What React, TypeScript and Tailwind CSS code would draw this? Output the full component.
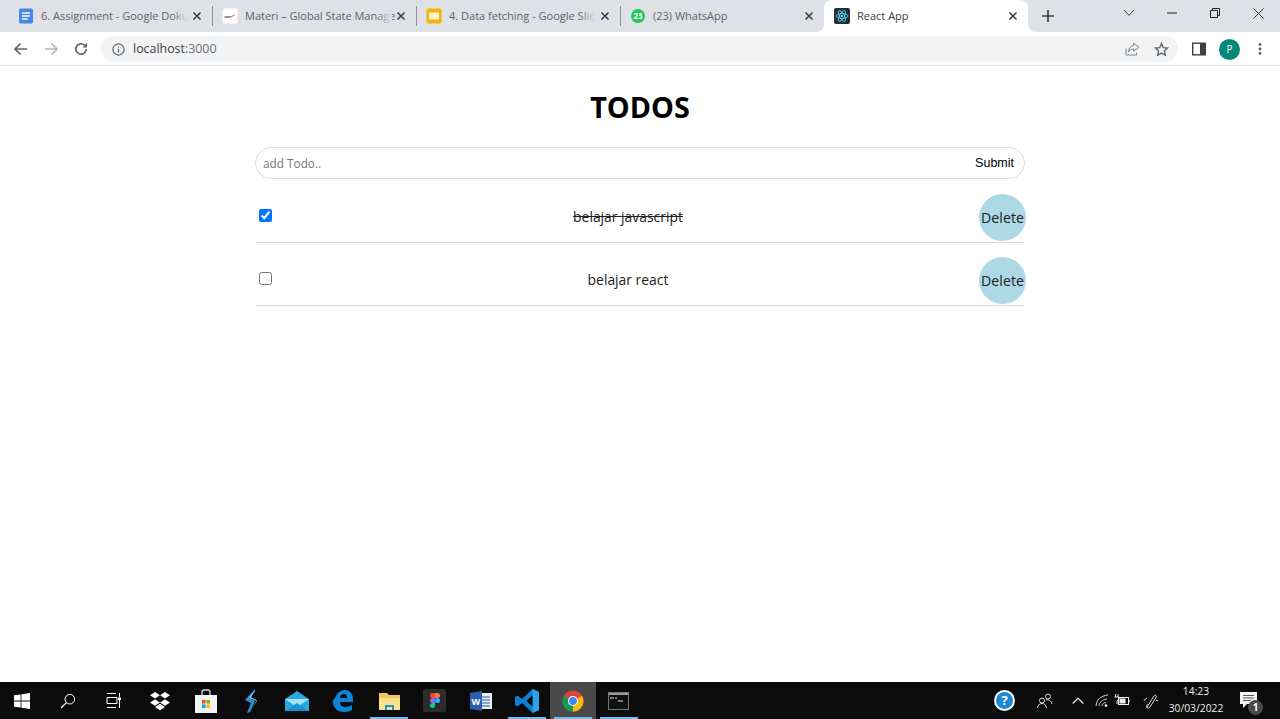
import React from 'react';

const uiFont = "font-['Open_Sans','Noto_Sans',sans-serif]";

function TabClose() {
  return (
    <svg width="10" height="10" viewBox="0 0 10 10" className="shrink-0">
      <path d="M1.500 1.500l7 7M8.500 1.500l-7 7" stroke="#3c4043" strokeWidth="1.600" />
    </svg>
  );
}

function DocsIcon() {
  return (
    <svg width="16" height="16" viewBox="0 0 16 16" className="shrink-0">
      <rect x="1" y="0.500" width="14" height="15" rx="1.800" fill="#4a86e8" />
      <path d="M4 5h8M4 8h8M4 11h5.500" stroke="#fff" strokeWidth="1.300" />
    </svg>
  );
}

function MateriIcon() {
  return (
    <svg width="16" height="16" viewBox="0 0 16 16" className="shrink-0">
      <rect x="0.500" y="0.500" width="15" height="15" rx="1.500" fill="#fff" />
      <path d="M2.500 9h6" stroke="#555" strokeWidth="1.200" />
      <path d="M8.500 9l4-2" stroke="#e8743b" strokeWidth="1.300" />
    </svg>
  );
}

function SlidesIcon() {
  return (
    <svg width="16" height="16" viewBox="0 0 16 16" className="shrink-0">
      <rect x="0.500" y="0.500" width="15" height="15" rx="1.800" fill="#f4b400" />
      <rect x="3" y="4.500" width="10" height="7" fill="#fff3cf" />
    </svg>
  );
}

function WhatsappIcon() {
  return (
    <svg width="16" height="16" viewBox="0 0 16 16" className="shrink-0">
      <circle cx="8" cy="8" r="7" fill="#25c75c" />
      <text x="8" y="11" textAnchor="middle" fontSize="8" fontWeight="700" fill="#fff" fontFamily="Open Sans">23</text>
    </svg>
  );
}

function ReactIcon() {
  return (
    <svg width="16" height="16" viewBox="0 0 16 16" className="shrink-0">
      <rect width="16" height="16" rx="2" fill="#20303a" />
      <g fill="none" stroke="#61dafb" strokeWidth="0.800">
        <ellipse cx="8" cy="8" rx="6" ry="2.400" />
        <ellipse cx="8" cy="8" rx="6" ry="2.400" transform="rotate(60 8 8)" />
        <ellipse cx="8" cy="8" rx="6" ry="2.400" transform="rotate(120 8 8)" />
      </g>
      <circle cx="8" cy="8" r="1.200" fill="#61dafb" />
    </svg>
  );
}

const tabs = [
  { title: '6. Assignment - Google Doku', icon: <DocsIcon /> },
  { title: 'Materi – Global State Manage', icon: <MateriIcon /> },
  { title: '4. Data fetching - Google Slic', icon: <SlidesIcon /> },
  { title: '(23) WhatsApp', icon: <WhatsappIcon /> },
];

function TabStrip() {
  return (
    <div className="flex h-8 shrink-0 items-stretch bg-[#dee1e6] pl-2">
      {tabs.map((tab, i) => (
        <div key={tab.title} className="relative flex w-[204px] items-center pl-[10px] pr-[10px]">
          {tab.icon}
          <span className="relative ml-[7px] flex-1 whitespace-nowrap text-[11px] text-[#5f6368]">
            {tab.title}
            <span className="absolute inset-y-0 right-1 w-4 bg-gradient-to-r from-transparent to-[#dee1e6]" />
          </span>
          <TabClose />
          {i < 3 ? <div className="absolute right-[-1px] top-[6px] h-[20px] w-px bg-[#8f9196]" /> : null}
        </div>
      ))}
      <div className="relative flex w-[204px] items-center rounded-t-lg bg-white pl-[10px] pr-[10px]">
        <div className="absolute bottom-0 left-[-8px] h-2 w-2 bg-white">
          <div className="h-2 w-2 rounded-br-lg bg-[#dee1e6]" />
        </div>
        <div className="absolute bottom-0 right-[-8px] h-2 w-2 bg-white">
          <div className="h-2 w-2 rounded-bl-lg bg-[#dee1e6]" />
        </div>
        <ReactIcon />
        <span className="ml-[7px] flex-1 whitespace-nowrap text-[11px] text-[#3c4043]">React App</span>
        <TabClose />
      </div>
      <div className="ml-[13px] flex w-[14px] items-center">
        <svg width="14" height="14" viewBox="0 0 14 14">
          <path d="M7 1v12M1 7h12" stroke="#3c4043" strokeWidth="1.700" />
        </svg>
      </div>
      <div className="ml-auto flex items-start">
        <div className="flex h-[26px] w-[43px] items-center justify-center">
          <svg width="12" height="8" viewBox="0 0 12 8">
            <path d="M1 1l5 5.400L11 1" stroke="#3c4043" fill="none" />
          </svg>
        </div>
        <div className="flex h-[26px] w-[43px] items-center justify-center">
          <svg width="10" height="2" viewBox="0 0 10 2">
            <path d="M0 1h10" stroke="#222" />
          </svg>
        </div>
        <div className="flex h-[26px] w-[43px] items-center justify-center">
          <svg width="10" height="10" viewBox="0 0 10 10">
            <path d="M.5 2.500h7v7h-7zM2.500 2.500v-2h7v7h-2" stroke="#222" fill="none" />
          </svg>
        </div>
        <div className="flex h-[26px] w-[44px] items-center justify-center">
          <svg width="11" height="11" viewBox="0 0 11 11">
            <path d="M.5.500l10 10M10.500.500l-10 10" stroke="#333" />
          </svg>
        </div>
      </div>
    </div>
  );
}

function Toolbar() {
  return (
    <div className="flex h-[34px] shrink-0 items-center border-b border-[#dfe1e5] bg-white pt-px">
      <div className="flex w-[101px] items-center pl-[13px]">
        <svg width="16" height="16" viewBox="0 0 16 16">
          <path d="M14 8H2.500M7.500 2.500L2 8l5.500 5.500" stroke="#5f6368" strokeWidth="1.700" fill="none" />
        </svg>
        <svg width="16" height="16" viewBox="0 0 16 16" className="ml-[14px]">
          <path d="M2 8h11.500M8.500 2.500L14 8l-5.500 5.500" stroke="#b4b6b9" strokeWidth="1.700" fill="none" />
        </svg>
        <svg width="16" height="16" viewBox="0 0 16 16" className="ml-[14px]">
          <path d="M13.200 8a5.200 5.200 0 1 1-1.600-3.800" stroke="#5f6368" strokeWidth="1.700" fill="none" />
          <path d="M14 1.800v4.600H9.400z" fill="#5f6368" />
        </svg>
      </div>
      <div className="flex h-[26px] w-[1077px] items-center rounded-full bg-[#f1f3f4] pl-[11px] pr-2">
        <svg width="13" height="13" viewBox="0 0 14 14" className="shrink-0">
          <circle cx="7" cy="7" r="6" stroke="#5f6368" strokeWidth="1.300" fill="none" />
          <path d="M7 6.200v4M7 3.700v1.200" stroke="#5f6368" strokeWidth="1.400" />
        </svg>
        <span className="ml-[8px] text-[12.4px] text-[#3c4043]">
          localhost<span className="text-[#6d7074]">:3000</span>
        </span>
        <svg width="16" height="16" viewBox="0 0 16 16" className="ml-auto mr-[14px]">
          <path d="M2 7.500V14h10.500v-2.500" stroke="#80868b" strokeWidth="1" fill="none" />
          <path d="M9.500 2L15 6.200l-5.500 4V8C7 8 5.300 9 4.200 11.200 4.500 7.600 6.400 5 9.500 4.600z" stroke="#80868b" strokeWidth="1" fill="none" />
        </svg>
        <svg width="15" height="15" viewBox="0 0 16 16" className="mr-[1px]">
          <path d="M8 1.600l1.900 4.300 4.600.5-3.400 3.100 1 4.600L8 11.800l-4.100 2.300 1-4.600-3.400-3.100 4.600-.5z" stroke="#5f6368" strokeWidth="1.400" fill="none" />
        </svg>
      </div>
      <svg width="14" height="14" viewBox="0 0 14 14" className="ml-[14px]">
        <rect x="0.700" y="1.200" width="12.600" height="11.600" fill="none" stroke="#3c4043" strokeWidth="1.400" />
        <rect x="8" y="1.200" width="5.300" height="11.600" fill="#3c4043" />
      </svg>
      <div className="ml-[13px] flex h-[21px] w-[21px] items-center justify-center rounded-full bg-[#00897b] text-[10px] text-white">
        P
      </div>
      <svg width="4" height="14" viewBox="0 0 4 14" className="ml-[18px]">
        <circle cx="2" cy="2.500" r="1.400" fill="#5f6368" />
        <circle cx="2" cy="7" r="1.400" fill="#5f6368" />
        <circle cx="2" cy="11.500" r="1.400" fill="#5f6368" />
      </svg>
    </div>
  );
}

function TodoRow({ text, done }: { text: string; done: boolean }) {
  return (
    <div className="mx-px flex h-[49px] items-center border-b border-[#d9d9d9] pl-[3px]">
      <input type="checkbox" defaultChecked={done} className="m-0 mb-[5px] h-[13px] w-[13px]" />
      <p className={`flex-1 pb-px pl-[5px] text-center text-[13.9px] text-[#222] ${done ? 'line-through' : ''}`}>{text}</p>
      <button className="mb-px mr-[-2px] h-[47px] w-[47px] rounded-full bg-[#add8e6] text-center text-[14.2px] text-[#222]">
        Delete
      </button>
    </div>
  );
}

function Page() {
  return (
    <div className="flex-1 bg-white">
      <div className="mx-auto w-[770px]">
        <h1 className="pb-[19px] pt-[20px] text-center text-[28.8px] font-bold leading-[42px] text-black">TODOS</h1>
        <form className="flex h-8 items-center rounded-full border border-[#dcdcdc] pl-[7px] pr-[10px]">
          <input
            placeholder="add Todo.."
            className="mt-[2px] flex-1 bg-transparent text-[11.8px] text-black outline-none placeholder:text-[#767676]"
          />
          <button type="button" className="text-[12.5px] font-['Liberation_Sans',sans-serif] text-black">
            Submit
          </button>
        </form>
        <div className="mt-[15px] flex flex-col gap-[14px]">
          <TodoRow text="belajar javascript" done />
          <TodoRow text="belajar react" done={false} />
        </div>
      </div>
    </div>
  );
}

function Slot({ children, active, open }: { children: React.ReactNode; active?: boolean; open?: boolean }) {
  return (
    <div className={`relative flex h-full w-[45.9px] shrink-0 items-center justify-center ${active ? 'bg-[#4a4a4a]' : ''}`}>
      {children}
      {open ? <div className="absolute inset-x-0 bottom-0 mx-auto h-[2px] w-[38px] bg-[#76b9ed]" /> : null}
    </div>
  );
}

function Taskbar() {
  return (
    <div className="flex h-[37px] shrink-0 items-stretch bg-[#0b0b0c] text-white">
      <div className="-ml-px flex">
        <Slot>
          <svg width="16" height="16" viewBox="0 0 16 16">
            <path d="M0 2.300l6.600-.9v6.200H0zM7.400 1.300L16 0v7.600H7.400zM0 8.400h6.600v6.200L0 13.700zM7.400 8.400H16V16l-8.600-1.300z" fill="#fff" />
          </svg>
        </Slot>
        <Slot>
          <svg width="16" height="16" viewBox="0 0 16 16">
            <circle cx="9.800" cy="6.200" r="4.800" stroke="#fff" fill="none" />
            <path d="M6.400 9.600L1 15" stroke="#fff" strokeWidth="1.200" />
          </svg>
        </Slot>
        <Slot>
          <svg width="16" height="15" viewBox="0 0 16 15">
            <path d="M1 .5h9M1 14.500h9M1 4.500h10v6H1zM13.500 0v4M13.500 7v8" stroke="#fff" fill="none" />
            <path d="M12 4.500h3v2.500h-3z" fill="#fff" />
          </svg>
        </Slot>
        <Slot>
          <svg width="22" height="20" viewBox="0 0 22 20">
            <path d="M6 1l5 3.300-5 3.300-5-3.300zM16 1l5 3.300-5 3.300-5-3.300zM6 8.200l5 3.300-5 3.300-5-3.300zM16 8.200l5 3.300-5 3.300-5-3.300zM6 16l5-3.200 5 3.200-5 3.300z" fill="#fff" />
          </svg>
        </Slot>
        <Slot>
          <svg width="22" height="24" viewBox="0 0 22 24">
            <path d="M7 6V3a2 2 0 0 1 2-2h4a2 2 0 0 1 2 2v3" stroke="#ddd" strokeWidth="1.300" fill="none" />
            <rect x="0" y="6" width="22" height="18" fill="#f3f3f3" />
            <rect x="7" y="11" width="3.600" height="3.600" fill="#f25022" />
            <rect x="11.400" y="11" width="3.600" height="3.600" fill="#7fba00" />
            <rect x="7" y="15.400" width="3.600" height="3.600" fill="#00a4ef" />
            <rect x="11.400" y="15.400" width="3.600" height="3.600" fill="#ffb900" />
          </svg>
        </Slot>
        <Slot>
          <svg width="14" height="24" viewBox="0 0 14 24">
            <path d="M11 0L1 11l6 3-4 10 3-1 5-11-5-2.500 5-7z" fill="#2e8fd8" />
            <path d="M11 0L5 9l8 3-6 9 6-10-6-2.500z" fill="#7fd0f7" />
          </svg>
        </Slot>
        <Slot>
          <svg width="24" height="20" viewBox="0 0 24 20">
            <path d="M0 8L12 0l12 8v12H0z" fill="#29a8e0" />
            <path d="M0 8l12 8 12-8" fill="#a6e2f7" />
            <path d="M0 20l12-8 12 8z" fill="#1c93cf" />
          </svg>
        </Slot>
        <Slot>
          <svg width="20" height="22" viewBox="0 0 20 22">
            <path d="M2 8C4 2 9 0 12 0c5 0 8 4 8 9v3H7c0 3 2 5 5 5 3 0 5-1 7-2v5c-2 1-4 2-8 2-6 0-11-4-11-10 0-1 0-3 2-4zm5 0h7c0-3-1-4-3-4-2 0-4 1-4 4z" fill="#0a84d6" />
          </svg>
        </Slot>
        <Slot open>
          <svg width="21" height="18" viewBox="0 0 21 18">
            <path d="M0 1h8l2 2h11v4H0z" fill="#f0c75e" />
            <rect y="6" width="21" height="12" fill="#fbe08e" />
            <path d="M6 18v-5h9v5h-2v-3H8v3z" fill="#1c93cf" />
          </svg>
        </Slot>
        <Slot>
          <div className="flex h-[23px] w-[23px] items-center justify-center rounded-[2px] bg-[#2c2c2c]">
            <svg width="10" height="15" viewBox="0 0 10 15">
              <path d="M0 2.500A2.500 2.500 0 0 1 2.500 0H5v5H2.500A2.500 2.500 0 0 1 0 2.500z" fill="#f24e1e" />
              <path d="M5 0h2.500a2.500 2.500 0 0 1 0 5H5z" fill="#ff7262" />
              <path d="M0 7.500A2.500 2.500 0 0 1 2.500 5H5v5H2.500A2.500 2.500 0 0 1 0 7.500z" fill="#a259ff" />
              <circle cx="7.500" cy="7.500" r="2.500" fill="#1abcfe" />
              <path d="M0 12.500A2.500 2.500 0 0 1 2.500 10H5v2.500a2.500 2.500 0 0 1-5 0z" fill="#0acf83" />
            </svg>
          </div>
        </Slot>
        <Slot>
          <svg width="22" height="20" viewBox="0 0 22 20">
            <rect x="8" y="2" width="14" height="16" fill="#e8eef7" />
            <path d="M12 6h8M12 9h8M12 12h8M12 15h8" stroke="#2b5797" />
            <path d="M0 2l12-2v20L0 18z" fill="#2b5fb3" />
            <text x="5.800" y="13.500" textAnchor="middle" fontSize="9" fontWeight="700" fill="#fff" fontFamily="Open Sans">W</text>
          </svg>
        </Slot>
        <Slot open>
          <svg width="24" height="24" viewBox="0 0 24 24">
            <path d="M17.500 0L24 3v18l-6.500 3L7 14l-4.500 3.500L0 16V8l2.500-1.500L7 10zM17.500 6.500L11.500 12l6 5.500z" fill="#0a7fd4" />
            <path d="M17.500 0L24 3v18l-6.500 3z" fill="#2aa3ef" />
            <path d="M17.500 6.500L11.500 12l6 5.500z" fill="#0b0b0c" />
          </svg>
        </Slot>
        <Slot active open>
          <svg width="22" height="22" viewBox="0 0 48 48">
            <circle cx="24" cy="24" r="23" fill="#db4437" />
            <path d="M24 24L43.900 12.500A23 23 0 0 1 24 47z" fill="#fbbc05" />
            <path d="M24 24L24 47A23 23 0 0 1 4.100 12.500z" fill="#0f9d58" />
            <circle cx="24" cy="24" r="11" fill="#fff" />
            <circle cx="24" cy="24" r="8.500" fill="#4285f4" />
          </svg>
        </Slot>
        <Slot open>
          <div className="h-[18px] w-[21px] border border-[#777] bg-[#111]">
            <div className="h-[2px] bg-[#999]" />
            <svg width="19" height="10" viewBox="0 0 19 10">
              <path d="M1 3h4M6 3h2M9 6h5" stroke="#ddd" />
            </svg>
          </div>
        </Slot>
      </div>

      <div className="ml-auto flex items-center">
        <div className="flex h-[21px] w-[21px] items-center justify-center rounded-full border-[2px] border-white bg-[#1e88d8] text-[13px] font-bold leading-none">
          ?
        </div>
        <svg width="16" height="16" viewBox="0 0 16 16" className="ml-[22px]">
          <circle cx="5" cy="7.500" r="2.500" stroke="#ddd" fill="none" />
          <path d="M.5 15c.3-3 2-4.500 4.500-4.500S9 12 9.500 15" stroke="#ddd" fill="none" />
          <circle cx="11" cy="3.500" r="2.500" stroke="#ddd" fill="none" />
          <path d="M9 7c2.500-.5 5 0 6 4" stroke="#ddd" fill="none" />
        </svg>
        <svg width="12" height="8" viewBox="0 0 12 8" className="ml-[19px]">
          <path d="M.7 6.500L6 1.200l5.300 5.300" stroke="#eee" strokeWidth="1.200" fill="none" />
        </svg>
        <svg width="14" height="13" viewBox="0 0 14 13" className="ml-[11px]">
          <path d="M1 12C1.500 6 5 2 13 1M4 12c.5-3.500 3-6.500 8-7M7 12c.3-1.800 1.500-3.200 4-3.600" stroke="#ccc" fill="none" />
          <circle cx="11" cy="11.500" r="1.300" fill="#fff" />
        </svg>
        <svg width="16" height="13" viewBox="0 0 16 13" className="ml-[5px]">
          <rect x="4.500" y="3.500" width="10" height="7" stroke="#eee" fill="none" />
          <rect x="5.500" y="4.500" width="6" height="5" fill="#eee" />
          <path d="M15 5.500v3" stroke="#eee" />
          <path d="M1.500 0v3M4 0v3M.5 3h4.500v2L3 7v3" stroke="#eee" fill="none" />
        </svg>
        <svg width="16" height="16" viewBox="0 0 16 16" className="ml-[13px]">
          <path d="M4 14L11 3c1-1.500 3-.5 2.300 1L7 14c-1 1.500-3 1.500-3.500 0-.3-1 .5-2 1-3" stroke="#ddd" fill="none" />
          <path d="M1 8c.5-1.500 1.500-2.500 3-3M13 7l2 1" stroke="#ddd" fill="none" />
        </svg>
        <div className="mb-[2px] ml-[6px] w-[62px] text-center text-[10.3px] leading-[17px] text-[#eee]">
          <div>14:23</div>
          <div>30/03/2022</div>
        </div>
        <div className="relative ml-[13px] mr-[20px] h-[24px] w-[20px]">
          <svg width="17" height="17" viewBox="0 0 17 17" className="mt-[3px]">
            <path d="M0 0h17v12H7l-4 4v-4H0z" fill="#f2f2f2" />
            <path d="M3 3.500h11M3 6h11M3 8.500h8" stroke="#555" />
          </svg>
          <div className="absolute bottom-[-2px] right-[-3px] flex h-[15px] w-[15px] items-center justify-center rounded-full bg-[#4a4a4a] text-[10px] font-bold leading-none text-white">
            1
          </div>
        </div>
      </div>
    </div>
  );
}

export default function App() {
  return (
    <div className={`flex h-[719px] w-full flex-col overflow-hidden ${uiFont}`}>
      <TabStrip />
      <Toolbar />
      <Page />
      <Taskbar />
    </div>
  );
}
